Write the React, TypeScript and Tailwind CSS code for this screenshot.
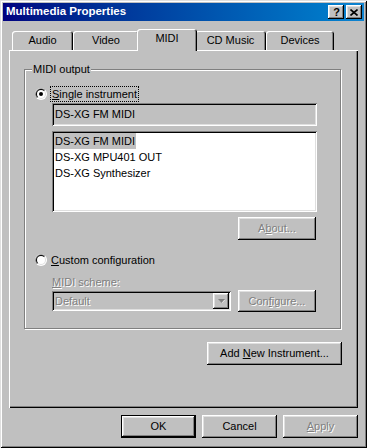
import React from "react";

const raised =
  "shadow-[inset_-1px_-1px_#000000,inset_1px_1px_#ffffff,inset_-2px_-2px_#808080,inset_2px_2px_#dfdfdf]";
const sunken =
  "shadow-[inset_1px_1px_#808080,inset_-1px_-1px_#ffffff,inset_2px_2px_#000000,inset_-2px_-2px_#dfdfdf]";
const disabledText = "text-[#808080] [text-shadow:1px_1px_0_#ffffff]";

function Radio({ checked }: { checked: boolean }) {
  return (
    <svg width="12" height="12" viewBox="0 0 12 12" className="shrink-0">
      <circle cx="6" cy="6" r="6" fill="#ffffff" />
      <path d="M1.76 10.24 A6 6 0 0 1 10.24 1.76 Z" fill="#808080" />
      <circle cx="6" cy="6" r="5" fill="#dfdfdf" />
      <path d="M2.46 9.54 A5 5 0 0 1 9.54 2.46 Z" fill="#000000" />
      <circle cx="6" cy="6" r="4" fill="#ffffff" />
      {checked && <circle cx="6" cy="6" r="2" fill="#000000" />}
    </svg>
  );
}

function Button({
  children,
  className,
  disabled,
  isDefault,
}: {
  children: React.ReactNode;
  className: string;
  disabled?: boolean;
  isDefault?: boolean;
}) {
  return (
    <div
      className={`${className} ${raised} ${isDefault ? "border border-black" : ""} ${
        disabled ? disabledText : "text-black"
      } flex items-center justify-center bg-[#c0c0c0] shrink-0`}
    >
      <span>{children}</span>
    </div>
  );
}

export default function App() {
  return (
    <div className="w-[367px] h-[448px] bg-[#c0c0c0] p-[3px] font-['Liberation_Sans',Arial,sans-serif] text-[11px] text-black shadow-[inset_1px_1px_#dfdfdf,inset_-1px_-1px_#000000,inset_2px_2px_#ffffff,inset_-2px_-2px_#808080]">
      {/* Title bar */}
      <div className="h-[18px] flex items-center justify-between bg-linear-to-r from-[#000080] to-[#1084d0] pl-[3px] pr-[2px]">
        <span className="text-white font-bold text-[11.5px] leading-none">Multimedia Properties</span>
        <div className="flex gap-[2px]">
          <div className={`w-[16px] h-[14px] bg-[#c0c0c0] ${raised} flex items-center justify-center`}>
            <span className="font-bold text-[11px] leading-none text-black pl-[1px]">?</span>
          </div>
          <div className={`w-[16px] h-[14px] bg-[#c0c0c0] ${raised} flex items-center justify-center`}>
            <svg width="8" height="7" viewBox="0 0 8 7">
              <path d="M0.5 0.5 L7.5 6.5 M7.5 0.5 L0.5 6.5" stroke="#000" strokeWidth="1.6" />
            </svg>
          </div>
        </div>
      </div>

      <div className="px-[6px] pt-[8px]">
        {/* Tabs */}
        <div className="flex items-end h-[21px] pl-[3px]">
          <div className="w-[61px] h-[19px] rounded-t-[3px] shadow-[inset_1px_1px_#ffffff,inset_-1px_0_#000000,inset_-2px_0_#808080] flex items-center justify-center">
            Audio
          </div>
          <div className="w-[66px] h-[19px] rounded-t-[3px] shadow-[inset_1px_1px_#ffffff,inset_-1px_0_#000000,inset_-2px_0_#808080] flex items-center justify-center">
            Video
          </div>
          <div className="relative z-10 w-[60px] h-[22px] -mx-[2px] -mb-[1px] pb-[3px] bg-[#c0c0c0] rounded-t-[3px] shadow-[inset_1px_1px_#ffffff,inset_-1px_0_#000000,inset_-2px_0_#808080] flex items-center justify-center">
            MIDI
          </div>
          <div className="w-[71px] h-[19px] rounded-t-[3px] shadow-[inset_1px_1px_#ffffff,inset_-1px_0_#000000,inset_-2px_0_#808080] flex items-center justify-center">
            CD Music
          </div>
          <div className="w-[68px] h-[19px] rounded-t-[3px] shadow-[inset_1px_1px_#ffffff,inset_-1px_0_#000000,inset_-2px_0_#808080] flex items-center justify-center">
            Devices
          </div>
        </div>

        {/* Panel */}
        <div className="h-[358px] bg-[#c0c0c0] pl-[15px] pt-[19px] shadow-[inset_1px_1px_#ffffff,inset_-1px_-1px_#000000,inset_-2px_-2px_#808080]">
          {/* Group box */}
          <div className="relative w-[317px] h-[260px] border border-[#808080] shadow-[inset_1px_1px_#ffffff,1px_1px_#ffffff] flex flex-col">
            <span className="absolute -top-[8px] left-[7px] px-[1px] bg-[#c0c0c0] leading-[14px]">MIDI output</span>

            <div className="mt-[16px] h-[16px] pl-[10px] flex items-center">
              <Radio checked />
              <span className="ml-[3px] px-[1px] h-[16px] leading-[14px] border border-dotted border-black">
                <u>S</u>ingle instrument
              </span>
            </div>

            <div className={`ml-[27px] mt-[1px] w-[265px] h-[23px] ${sunken} bg-[#c0c0c0] flex items-center pl-[3px]`}>
              DS-XG FM MIDI
            </div>

            <div className={`ml-[27px] mt-[5px] w-[265px] h-[81px] ${sunken} bg-white p-[2px] flex flex-col`}>
              <div className="h-[16px] leading-[16px]">
                <span className="inline-block px-[1px] bg-[#c0c0c0]">DS-XG FM MIDI</span>
              </div>
              <div className="h-[16px] leading-[16px]">
                <span className="inline-block px-[1px]">DS-XG MPU401 OUT</span>
              </div>
              <div className="h-[16px] leading-[16px]">
                <span className="inline-block px-[1px]">DS-XG Synthesizer</span>
              </div>
            </div>

            <div className="mt-[5px] ml-[213px] flex">
              <Button className="w-[78px] h-[23px]" disabled>
                A<u>b</u>out...
              </Button>
            </div>

            <div className="mt-[12px] h-[16px] pl-[10px] flex items-center">
              <Radio checked={false} />
              <span className="ml-[4px] leading-[14px]">
                <u>C</u>ustom configuration
              </span>
            </div>

            <div className={`mt-[7px] ml-[27px] h-[14px] leading-[14px] ${disabledText}`}>
              <u>M</u>IDI scheme:
            </div>

            <div className="mt-[1px] ml-[27px] h-[22px] flex items-center">
              <div className={`w-[179px] h-[20px] ${sunken} bg-[#c0c0c0] flex items-center justify-between pl-[3px] pr-[2px]`}>
                <span className={disabledText}>Default</span>
                <div className={`w-[16px] h-[16px] ${raised} bg-[#c0c0c0] flex items-center justify-center`}>
                  <svg width="7" height="5" viewBox="0 0 7 5">
                    <path d="M1 1 L7 1 L4 4 Z" fill="#ffffff" />
                    <path d="M0 0 L7 0 L3.5 4 Z" fill="#808080" />
                  </svg>
                </div>
              </div>
              <div className="ml-[7px]">
                <Button className="w-[78px] h-[22px]" disabled>
                  Con<u>f</u>igure...
                </Button>
              </div>
            </div>
          </div>

          <div className="mt-[13px] ml-[183px] flex">
            <Button className="w-[135px] h-[23px]">
              Add <u>N</u>ew Instrument...
            </Button>
          </div>
        </div>
      </div>

      {/* Dialog buttons */}
      <div className="mt-[7px] pr-[6px] flex justify-end gap-[6px]">
        <Button className="w-[75px] h-[23px]" isDefault>
          OK
        </Button>
        <Button className="w-[75px] h-[23px]">Cancel</Button>
        <Button className="w-[75px] h-[23px]" disabled>
          <u>A</u>pply
        </Button>
      </div>
    </div>
  );
}
